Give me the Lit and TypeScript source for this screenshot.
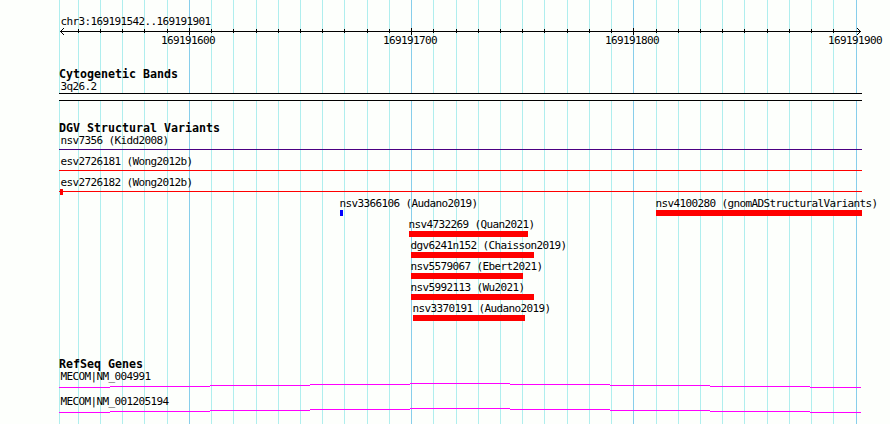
import { LitElement, html, svg, css } from "lit";
import { customElement } from "lit/decorators.js";

const START = 169191542;
const LEFT = 60;
const SCALE = 800 / 360;

const toX = (pos: number) => Math.round(LEFT + (pos - START) * SCALE);

interface Variant {
  name: string;
  x: number;
  width: number;
  color?: string;
}

const ticks = Array.from({ length: 36 }, (_, i) => 169191550 + i * 10);
const isMajor = (pos: number) => pos % 100 === 0;

const spans = [
  { name: "nsv7356 (Kidd2008)", color: "#4b0082", tip: false },
  { name: "esv2726181 (Wong2012b)", color: "#ff0000", tip: false },
  { name: "esv2726182 (Wong2012b)", color: "#ff0000", tip: true },
];

const variants: Variant[][] = [
  [
    { name: "nsv3366106 (Audano2019)", x: 340, width: 3, color: "#0000ff" },
    { name: "nsv4100280 (gnomADStructuralVariants)", x: 656, width: 206 },
  ],
  [{ name: "nsv4732269 (Quan2021)", x: 409, width: 119 }],
  [{ name: "dgv6241n152 (Chaisson2019)", x: 411, width: 123 }],
  [{ name: "nsv5579067 (Ebert2021)", x: 411, width: 112 }],
  [{ name: "nsv5992113 (Wu2021)", x: 411, width: 123 }],
  [{ name: "nsv3370191 (Audano2019)", x: 413, width: 112 }],
];

const genes = ["MECOM|NM_004991", "MECOM|NM_001205194"];

// the intron line climbs one pixel per step up to the middle, then drops again
const intron = [
  [0, 51, 4],
  [51, 100, 3],
  [151, 100, 2],
  [251, 100, 1],
  [351, 100, 0],
  [451, 100, 1],
  [551, 100, 2],
  [651, 100, 3],
  [751, 51, 4],
];

@customElement("app-root")
export class AppRoot extends LitElement {
  private _grid() {
    return svg`
      <rect class="minor" x="59" y="0" width="1" height="424"></rect>
      ${ticks.map(pos => svg`
        <rect class=${isMajor(pos) ? "major" : "minor"} x=${toX(pos)} y="0" width="1" height="424"></rect>
      `)}
    `;
  }

  private _ruler() {
    return html`
      <div class="ruler">
        <div class="label">chr3:169191542..169191901</div>
        <svg class="scale" width="890" height="20" shape-rendering="crispEdges">
          <rect x="60" y="3" width="801" height="1"></rect>
          <path d="M61 2h1v1h-1zM62 1h1v1h-1zM63 0h1v1h-1zM61 4h1v1h-1zM62 5h1v1h-1zM63 6h1v1h-1z"></path>
          <path d="M859 2h1v1h-1zM858 1h1v1h-1zM857 0h1v1h-1zM859 4h1v1h-1zM858 5h1v1h-1zM857 6h1v1h-1z"></path>
          ${ticks.slice(0, -1).map(pos => svg`
            <rect x=${toX(pos)} y=${isMajor(pos) ? 0 : 1} width="1" height=${isMajor(pos) ? 7 : 4}></rect>
          `)}
          ${ticks.filter(isMajor).map(pos => svg`<text x=${toX(pos) - 28} y="16">${pos}</text>`)}
        </svg>
      </div>
    `;
  }

  render() {
    return html`
      <svg class="grid" width="890" height="424" shape-rendering="crispEdges">${this._grid()}</svg>
      <main>
        ${this._ruler()}

        <section class="bands">
          <h2>Cytogenetic Bands</h2>
          <div class="label">3q26.2</div>
          <div class="band"></div>
        </section>

        <section class="variants">
          <h2>DGV Structural Variants</h2>
          ${spans.map(s => html`
            <div class="row">
              <div class="label">${s.name}</div>
              <svg class="span" width="803" height="6" shape-rendering="crispEdges" fill=${s.color}>
                <rect y="2" width="803" height="1"></rect>
                ${s.tip ? svg`<rect x="1" width="3" height="6"></rect>` : null}
              </svg>
            </div>
          `)}
          ${variants.map(row => html`
            <div class="row overlap">
              ${row.map(v => html`
                <div class="variant" style="margin-left: ${v.x}px">
                  <div class="name">${v.name}</div>
                  <div class="bar" style="width: ${v.width}px; background: ${v.color ?? "#ff0000"}"></div>
                </div>
              `)}
            </div>
          `)}
        </section>

        <section class="genes">
          <h2>RefSeq Genes</h2>
          ${genes.map(name => html`
            <div class="gene">
              <div class="label">${name}</div>
              <svg class="span" width="803" height="5" shape-rendering="crispEdges" fill="#ff00ff">
                ${intron.map(([x, w, y]) => svg`<rect x=${x} y=${y} width=${w} height="1"></rect>`)}
              </svg>
            </div>
          `)}
        </section>
      </main>
    `;
  }

  static styles = css`
    :host {
      display: block;
      position: relative;
      width: 890px;
      height: 424px;
      overflow: hidden;
      background: #fdfffc;
      color: #000;
      font: 11px/13px "DejaVu Sans Mono", monospace;
      letter-spacing: -0.62px;
    }
    svg {
      display: block;
    }
    .grid {
      position: absolute;
      inset: 0;
    }
    .minor {
      fill: #afeeee;
    }
    .major {
      fill: #87ceeb;
    }
    main {
      position: relative;
      display: flex;
      flex-direction: column;
    }
    h2 {
      margin: 0 0 0 59px;
      height: 12px;
      font-size: 11.63px;
      line-height: 13px;
      font-weight: bold;
      letter-spacing: 0;
    }
    .label {
      margin-left: 60.5px;
      height: 13px;
      white-space: nowrap;
    }
    .ruler {
      height: 53px;
      padding-top: 15px;
    }
    .bands {
      height: 54px;
    }
    .band {
      box-sizing: border-box;
      width: 803px;
      height: 8px;
      margin-left: 59px;
      border: solid #000;
      border-width: 1px 0;
      background: #fdfffc;
    }
    .variants {
      height: 236px;
    }
    .row {
      height: 21px;
    }
    .span {
      margin-left: 59px;
    }
    .overlap {
      display: grid;
    }
    .variant {
      grid-area: 1 / 1;
    }
    .name {
      height: 13px;
      margin-left: -0.5px;
      white-space: nowrap;
    }
    .bar {
      height: 6px;
    }
    .gene {
      height: 25px;
    }
  `;
}
